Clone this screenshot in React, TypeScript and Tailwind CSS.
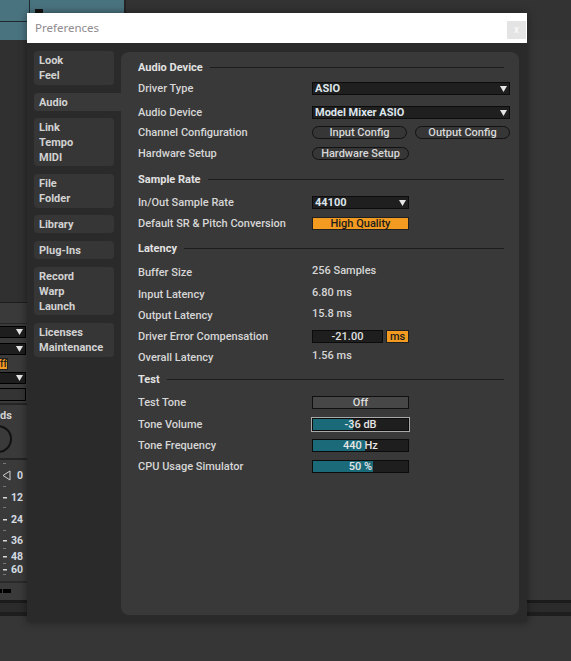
import React from "react";

function Arrow() {
  return (
    <svg width="7" height="6" viewBox="0 0 7 6" className="shrink-0">
      <path d="M0 0H7L3.5 6Z" fill="#e6e6e6" />
    </svg>
  );
}

function Header({ title, mt }: { title: string; mt: string }) {
  return (
    <div className={`flex items-center h-[21px] pr-[15px] ${mt}`}>
      <span className="font-bold text-[#e2e2e2] mt-[2px]">{title}</span>
      <div className="flex-1 h-px bg-[#1c1c1c] ml-[7px]" />
    </div>
  );
}

function Row({ label, mt, children }: { label: string; mt: string; children?: React.ReactNode }) {
  return (
    <div className={`flex items-center h-[21px] ${mt}`}>
      <div className="w-[174px] shrink-0 mt-[2px]">{label}</div>
      {children}
    </div>
  );
}

function Dropdown({ value, w }: { value: string; w: string }) {
  return (
    <div className={`${w} h-[13px] border border-[#0c0c0c] bg-[#1f1f1f] flex items-center justify-between pl-[2px] pr-[2px]`}>
      <span className="font-bold text-[#dde5ec] leading-none">{value}</span>
      <Arrow />
    </div>
  );
}

function Pill({ label, w }: { label: string; w: string }) {
  return (
    <div className={`${w} h-[13px] rounded-full border border-[#121212] bg-[#363636] flex items-center justify-center leading-none text-[#d8d8d8]`}>
      {label}
    </div>
  );
}

function Slider({ value, fill, focused }: { value: string; fill: number; focused?: boolean }) {
  return (
    <div
      className={`w-[97px] h-[13px] border border-[#0c0c0c] bg-[#1e1e1e] grid ${focused ? "ring-1 ring-[#a9a9a9]" : ""}`}
    >
      <div className="col-start-1 row-start-1 h-full bg-[#1b6a79]" style={{ width: fill }} />
      <div className="col-start-1 row-start-1 flex items-center justify-center leading-none text-[#e6e6e6]">
        {value}
      </div>
    </div>
  );
}

function Tab({ lines, h, mt, active }: { lines: string[]; h: string; mt: string; active?: boolean }) {
  return (
    <div
      className={`${h} ${mt} ${active ? "w-[87px] rounded-l-[4px] bg-[#393939]" : "w-[80px] rounded-[4px] bg-[#363636]"} pl-[5px] pt-[2px] leading-[15px] font-bold text-[#d2d2d2]`}
    >
      {lines.map((l) => (
        <div key={l}>{l}</div>
      ))}
    </div>
  );
}

function LeftStrip() {
  return (
    <div className="w-[27px] flex flex-col shrink-0">
      <div className="h-[262px] bg-[#303030]" />
      <div className="h-px bg-[#1c1c1c]" />
      <div className="flex-1 bg-[#3a3a3a] flex flex-col">
        <div className="h-[20px]" />
        <div className="h-px bg-[#262626]" />
        <div className="mt-[2px] w-[26px] h-[12px] border border-l-0 border-black bg-[#1e1e1e] flex items-center justify-end pr-[2px]">
          <Arrow />
        </div>
        <div className="mt-[5px] w-[26px] h-[12px] border border-l-0 border-black bg-[#1e1e1e] flex items-center justify-end pr-[2px]">
          <Arrow />
        </div>
        <div className="mt-[3px] w-[8px] h-[12px] border border-l-0 border-[#222] bg-[#f39b21] flex items-center justify-end text-[10px] leading-none text-[#1e1e1e] font-medium overflow-hidden">
          ff
        </div>
        <div className="mt-[2px] w-[26px] h-[12px] border border-l-0 border-black bg-[#1e1e1e] flex items-center justify-end pr-[2px]">
          <Arrow />
        </div>
        <div className="mt-[4px] w-[26px] h-[13px] border border-l-0 border-black bg-[#343434]" />
        <div className="mt-[2px] h-[2px] bg-[#242424]" />
        <div className="h-[53px] flex flex-col">
          <div className="mt-[5px] text-[11px] font-bold leading-[12px] text-[#d0d0d0]">ds</div>
          <svg width="27" height="34" viewBox="0 0 27 34" className="mt-[2px]">
            <path d="M-2 2 A 13 13 0 0 1 -2 28" fill="none" stroke="#111" strokeWidth="2" />
          </svg>
        </div>
        <div className="h-[2px] bg-[#242424]" />
        <svg width="27" height="121" viewBox="0 0 27 121" className="shrink-0">
          <g fill="#777">
            <rect x="3" y="3" width="3" height="1" />
            <rect x="3" y="26" width="3" height="1" />
            <rect x="3" y="47" width="3" height="1" />
            <rect x="3" y="70" width="3" height="1" />
            <rect x="3" y="88" width="3" height="1" />
            <rect x="3" y="103" width="3" height="1" />
            <rect x="3" y="114" width="3" height="1" />
          </g>
          <path d="M10 11 L10 20 L3 15.5 Z" fill="none" stroke="#cfcfcf" strokeWidth="1" />
          <g fill="#d8d8d8">
            <rect x="3" y="37" width="4" height="1.5" />
            <rect x="3" y="59" width="4" height="1.5" />
            <rect x="3" y="80" width="4" height="1.5" />
            <rect x="3" y="96" width="4" height="1.5" />
            <rect x="3" y="109" width="4" height="1.5" />
          </g>
          <g fill="#d6dde3" fontFamily="Roboto, sans-serif" fontWeight="700" fontSize="10.5" textAnchor="end">
            <text x="23" y="19">0</text>
            <text x="23" y="41">12</text>
            <text x="23" y="63">24</text>
            <text x="23" y="84">36</text>
            <text x="23" y="100">48</text>
            <text x="23" y="113">60</text>
          </g>
        </svg>
        <div className="h-[2px] bg-[#2a2a2a]" />
        <div className="mt-[6px] flex gap-[1px]">
          <div className="w-[2px] h-[4px] bg-black" />
          <div className="w-[8px] h-[4px] bg-black" />
        </div>
      </div>
    </div>
  );
}

export default function App() {
  return (
    <div className="relative w-[571px] h-[661px] overflow-hidden bg-[#363636] font-['Roboto',sans-serif] text-[11px] font-medium text-[#d6d6d6]">
      <div className="flex flex-col h-full">
        <div className="flex h-[40px] shrink-0">
          <div className="w-[124px] bg-[#4a7380] grid grid-cols-[30px_1fr] grid-rows-[22px_1fr]">
            <div className="border-r border-b border-[#1d2b30]" />
            <div className="row-span-2 pl-[5px] pt-[9px]">
              <div className="w-[8px] h-[6px] bg-[#141414]" />
            </div>
            <div className="border-r border-[#1d2b30]" />
          </div>
          <div className="w-[2px] bg-[#252525]" />
          <div className="flex-1 bg-[#333333]" />
        </div>
        <div className="flex h-[560px] shrink-0">
          <LeftStrip />
          <div className="flex-1" />
        </div>
        <div className="h-[3px] bg-[#1b1b1b] shrink-0" />
        <div className="h-[9px] bg-[#2b2b2b] shrink-0" />
        <div className="h-[4px] bg-[#1e1e1e] shrink-0" />
        <div className="flex-1" />
      </div>

      <div className="absolute left-[27px] top-[13px] w-[500px] h-[609px] bg-[#2a2a2a] shadow-[0_0_8px_rgba(0,0,0,0.45)] flex flex-col">
        <div className="h-[30px] bg-white flex justify-between pl-[8px] pr-[1px] shrink-0">
          <span className="self-center font-['Noto_Sans',sans-serif] font-normal text-[11.5px] text-[#8e8a8e]">
            Preferences
          </span>
          <div className="mt-[8px] w-[19px] h-[18px] bg-[#e4e4e4] flex items-center justify-center text-white text-[10px] font-normal leading-none">
            x
          </div>
        </div>
        <div className="flex flex-1 pt-[8px] pb-[7px] pl-[7px] pr-[8px] gap-[7px] min-h-0">
          <div className="w-[80px] shrink-0 flex flex-col">
            <Tab lines={["Look", "Feel"]} h="h-[34px]" mt="" />
            <Tab lines={["Audio"]} h="h-[18px]" mt="mt-[8px]" active />
            <Tab lines={["Link", "Tempo", "MIDI"]} h="h-[48px]" mt="mt-[7px]" />
            <Tab lines={["File", "Folder"]} h="h-[34px]" mt="mt-[8px]" />
            <Tab lines={["Library"]} h="h-[18px]" mt="mt-[7px]" />
            <Tab lines={["Plug-Ins"]} h="h-[18px]" mt="mt-[8px]" />
            <Tab lines={["Record", "Warp", "Launch"]} h="h-[48px]" mt="mt-[8px]" />
            <Tab lines={["Licenses", "Maintenance"]} h="h-[34px]" mt="mt-[8px]" />
          </div>
          <div className="flex-1 mt-[1px] rounded-[8px] bg-[#393939] pl-[17px] pt-[5px] flex flex-col">
            <Header title="Audio Device" mt="" />
            <Row label="Driver Type" mt="">
              <Dropdown value="ASIO" w="w-[198px]" />
            </Row>
            <Row label="Audio Device" mt="mt-[3px]">
              <Dropdown value="Model Mixer ASIO" w="w-[198px]" />
            </Row>
            <Row label="Channel Configuration" mt="-mt-px">
              <div className="flex gap-[8px]">
                <Pill label="Input Config" w="w-[95px]" />
                <Pill label="Output Config" w="w-[95px]" />
              </div>
            </Row>
            <Row label="Hardware Setup" mt="">
              <Pill label="Hardware Setup" w="w-[97px]" />
            </Row>
            <Header title="Sample Rate" mt="mt-[5px]" />
            <Row label="In/Out Sample Rate" mt="mt-[2px]">
              <Dropdown value="44100" w="w-[97px]" />
            </Row>
            <Row label="Default SR & Pitch Conversion" mt="">
              <div className="w-[97px] h-[13px] border border-[#202020] bg-[#f39b21] flex items-center justify-center leading-none text-[#1c1c1c]">
                High Quality
              </div>
            </Row>
            <Header title="Latency" mt="mt-[4px]" />
            <Row label="Buffer Size" mt="mt-[3px]">
              <span className="mb-[3px]">256 Samples</span>
            </Row>
            <Row label="Input Latency" mt="mt-px">
              <span className="mb-[3px]">6.80 ms</span>
            </Row>
            <Row label="Output Latency" mt="">
              <span className="mb-[3px]">15.8 ms</span>
            </Row>
            <Row label="Driver Error Compensation" mt="">
              <div className="flex gap-[3px]">
                <div className="w-[71px] h-[13px] border border-[#0c0c0c] bg-[#1e1e1e] flex items-center justify-center leading-none text-[#e0e0e0]">
                  -21.00
                </div>
                <div className="w-[23px] h-[13px] border border-[#202020] bg-[#f39b21] flex items-center justify-center leading-none text-[#1c1c1c]">
                  ms
                </div>
              </div>
            </Row>
            <Row label="Overall Latency" mt="">
              <span className="mb-[3px]">1.56 ms</span>
            </Row>
            <Header title="Test" mt="mt-px" />
            <Row label="Test Tone" mt="mt-[2px]">
              <div className="w-[97px] h-[13px] border border-[#101010] bg-[#474747] flex items-center justify-center leading-none text-[#dcdcdc]">
                Off
              </div>
            </Row>
            <Row label="Tone Volume" mt="mt-px">
              <Slider value="-36 dB" fill={40} focused />
            </Row>
            <Row label="Tone Frequency" mt="">
              <Slider value="440 Hz" fill={52} />
            </Row>
            <Row label="CPU Usage Simulator" mt="">
              <Slider value="50 %" fill={60} />
            </Row>
          </div>
        </div>
      </div>
    </div>
  );
}
